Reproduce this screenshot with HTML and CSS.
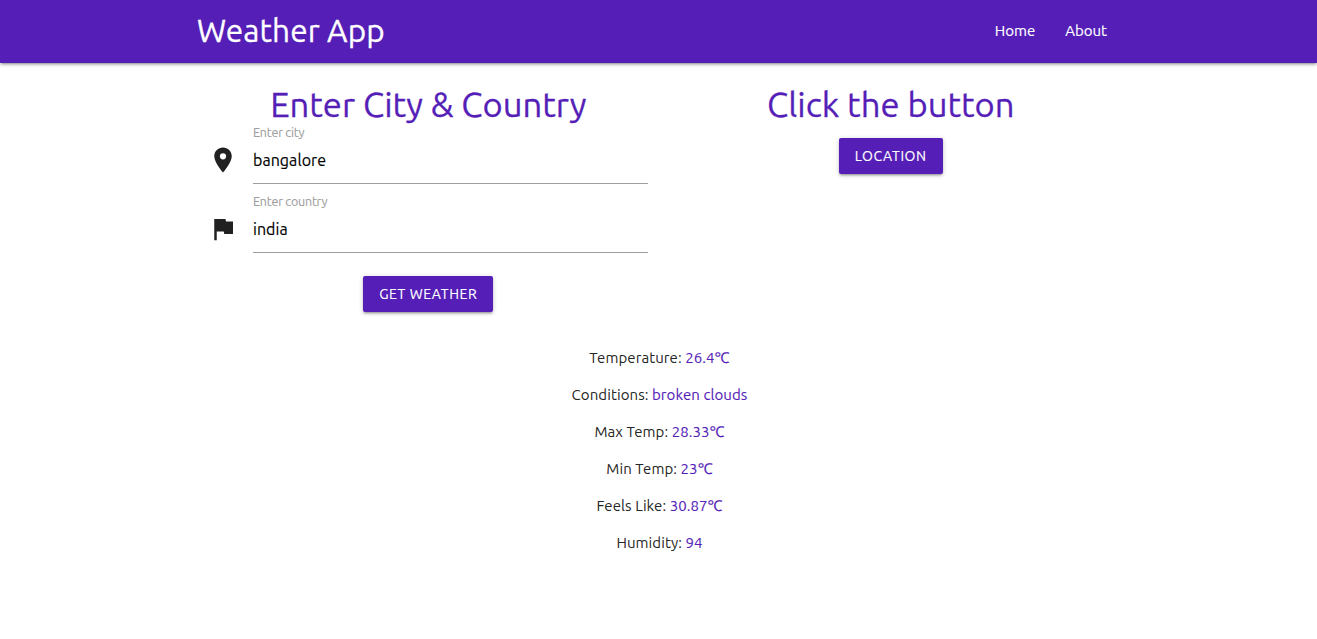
FILE: index.html
```html
<!DOCTYPE html>
<html lang="en">
<head>
<meta charset="utf-8">
<title>Weather App</title>
<link rel="stylesheet" href="styles.css">
</head>
<body>
<nav class="navbar">
  <div class="container navbar-inner">
    <a class="brand">Weather App</a>
    <ul class="links"><li>Home</li><li>About</li></ul>
  </div>
</nav>
<main class="container">
  <div class="row">
    <section class="col">
      <h4 class="title">Enter City &amp; Country</h4>
      <div class="field">
        <svg class="icon" viewBox="0 0 24 24"><path d="M12 2C8.130 2 5 5.130 5 9c0 5.250 7 13 7 13s7-7.750 7-13c0-3.870-3.130-7-7-7zm0 9.500a2.500 2.500 0 0 1 0-5 2.500 2.500 0 0 1 0 5z"/></svg>
        <label class="input"><span class="label">Enter city</span><span class="value">bangalore</span></label>
      </div>
      <div class="field">
        <svg class="icon" viewBox="0 0 24 24"><path d="M14.400 6L14 4H5v17h2v-7h5.600l.4 2h7V6z"/></svg>
        <label class="input"><span class="label">Enter country</span><span class="value">india</span></label>
      </div>
      <button class="btn btn-weather">GET WEATHER</button>
    </section>
    <section class="col">
      <h4 class="title">Click the button</h4>
      <button class="btn btn-location">LOCATION</button>
    </section>
  </div>
  <div class="results">
    <p>Temperature: <span>26.4℃</span></p>
    <p>Conditions: <span>broken clouds</span></p>
    <p>Max Temp: <span>28.33℃</span></p>
    <p>Min Temp: <span>23℃</span></p>
    <p>Feels Like: <span>30.87℃</span></p>
    <p>Humidity: <span>94</span></p>
  </div>
</main>
</body>
</html>
```
FILE: styles.css
```css
* { box-sizing: border-box; }
body { margin: 0; background: #fff; color: rgba(0,0,0,.87); font: 15px/1.5 Ubuntu, "Open Sans", "Noto Sans", sans-serif; -webkit-text-stroke: .15px; }
.container { width: 925px; margin: 0 auto 0 197px; }
.navbar { height: 63px; background: #541eb7; color: #fff; box-shadow: 0 2px 2px 0 rgba(0,0,0,.14), 0 3px 1px -2px rgba(0,0,0,.12), 0 1px 5px 0 rgba(0,0,0,.2); }
.navbar-inner { display: flex; justify-content: space-between; line-height: 62px; }
.brand { font-size: 31.500px; letter-spacing: .12px; -webkit-text-stroke: .3px; }
.links { display: flex; list-style: none; margin: 0; padding: 0; }
.links li { padding: 0 15px; }
.row { display: flex; padding-top: 24px; }
.col { width: 50%; padding: 0 11px; display: flex; flex-direction: column; align-items: center; }
.title { margin: 0 0 2px; font-size: 34.600px; font-weight: 400; line-height: 36px; color: #541eb7; white-space: nowrap; -webkit-text-stroke: .3px; }
.field { display: flex; width: 100%; height: 69px; }
.icon { flex: none; width: 30px; height: 30px; margin: 20px 15px 0 0; fill: #212121; }
.input { flex: none; width: 395px; height: 59px; border-bottom: 1px solid #9e9e9e; display: flex; flex-direction: column; }
.label { font-size: 12.500px; letter-spacing: -.2px; line-height: 14px; color: #9e9e9e; -webkit-text-stroke: .1px; }
.value { font-size: 16px; letter-spacing: .05px; line-height: 42px; color: #000; }
.btn { font: 14px/36px Ubuntu, "Open Sans", "Noto Sans", sans-serif; letter-spacing: .6px; padding: 0; border: 0; border-radius: 2px; height: 36px; background: #541eb7; color: #fff; -webkit-text-stroke: .15px; box-shadow: 0 2px 2px 0 rgba(0,0,0,.14), 0 3px 1px -2px rgba(0,0,0,.12), 0 1px 5px 0 rgba(0,0,0,.2); }
.btn-weather { width: 130px; margin-top: 13px; }
.btn-location { width: 104px; margin-top: 13px; }
.results { text-align: center; padding-top: 35px; letter-spacing: .08px; -webkit-text-stroke: .1px; }
.results p { margin: 0 0 15px; line-height: 22px; }
.results span { color: #541eb7; }
```
